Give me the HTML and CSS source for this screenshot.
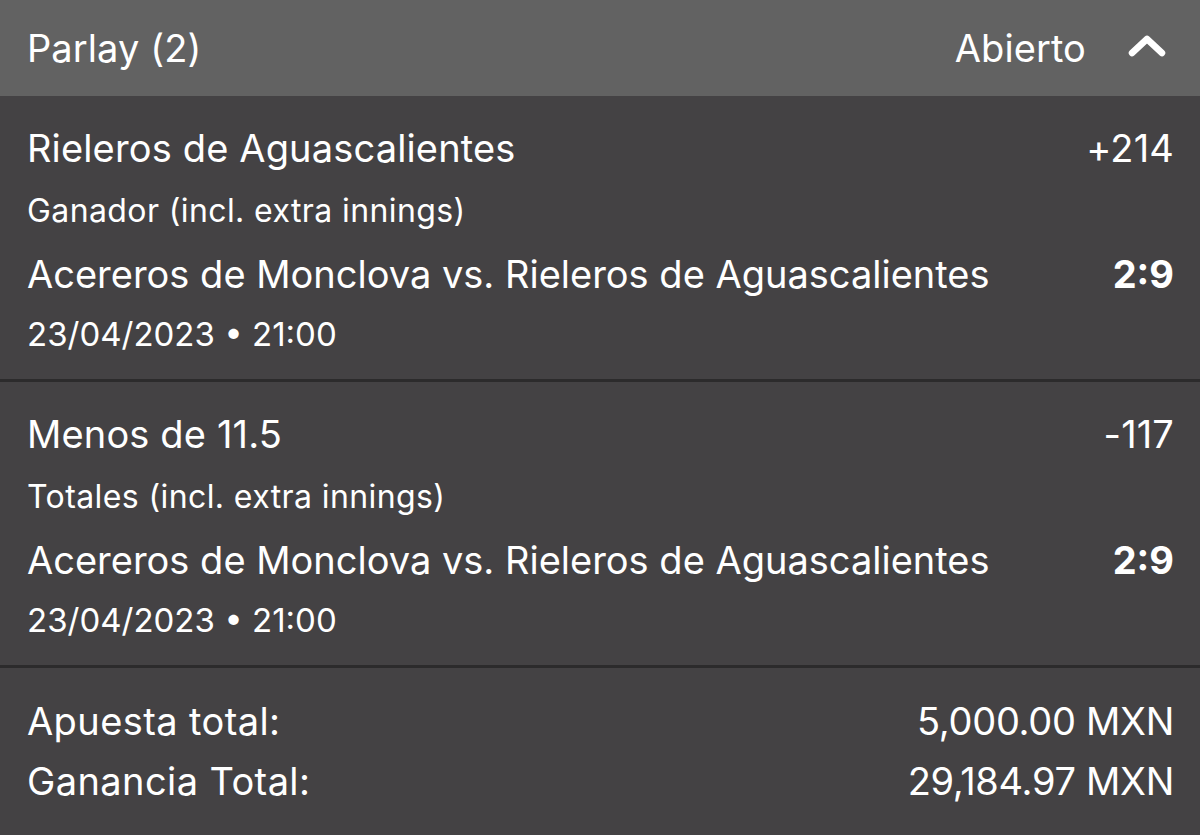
FILE: index.html
```html
<!DOCTYPE html>
<html lang="es">
<head>
<meta charset="utf-8">
<link rel="stylesheet" href="styles.css">
</head>
<body>
<div class="slip">
  <div class="head">
    <span class="head-title">Parlay (2)</span>
    <span class="head-right">
      <span class="status">Abierto</span>
      <svg class="chev" width="38" height="24" viewBox="0 0 38 24"><path d="M4 19 L19 5 L34 19" fill="none" stroke="#fff" stroke-width="6.5" stroke-linecap="round" stroke-linejoin="round"/></svg>
    </span>
  </div>
  <div class="leg">
    <div class="row r1"><span>Rieleros de Aguascalientes</span><span>+214</span></div>
    <div class="row r2"><span>Ganador (incl. extra innings)</span></div>
    <div class="row r3"><span>Acereros de Monclova vs. Rieleros de Aguascalientes</span><span class="score">2:9</span></div>
    <div class="row r4"><span>23/04/2023 • 21:00</span></div>
  </div>
  <div class="leg">
    <div class="row r1"><span>Menos de 11.5</span><span>-117</span></div>
    <div class="row r2"><span>Totales (incl. extra innings)</span></div>
    <div class="row r3"><span>Acereros de Monclova vs. Rieleros de Aguascalientes</span><span class="score">2:9</span></div>
    <div class="row r4"><span>23/04/2023 • 21:00</span></div>
  </div>
  <div class="totals">
    <div class="row t"><span>Apuesta total:</span><span class="val">5,000.00 MXN</span></div>
    <div class="row t"><span>Ganancia Total:</span><span class="val">29,184.97 MXN</span></div>
  </div>
</div>
</body>
</html>
```
FILE: styles.css
```css
html, body { margin: 0; padding: 0; }
body {
  background: #444244;
  font-family: Inter, "Noto Sans", sans-serif;
  color: #fff;
  width: 1200px;
  height: 835px;
  overflow: hidden;
}
.slip { display: flex; flex-direction: column; }
.head {
  height: 96px;
  background: #626262;
  display: flex;
  align-items: center;
  justify-content: space-between;
  padding: 0 27px 0 27px;
  font-size: 38px;
  letter-spacing: 0.1px;
}
.head-right { display: flex; align-items: center; gap: 42px; }
.chev { margin-right: 7px; margin-bottom: 4px; }
.leg {
  height: 286px;
  box-sizing: border-box;
  border-bottom: 3px solid #2c2b2c;
  padding: 29px 26px 0 27px;
}
.row { display: flex; justify-content: space-between; align-items: baseline; }
.r1 { font-size: 38px; height: 66px; letter-spacing: 0.15px; }
.r2 { font-size: 32px; height: 60px; letter-spacing: 0.4px; }
.r3 { font-size: 38px; height: 63px; }
.r4 { font-size: 33px; }
.score { font-weight: 700; }
.totals { padding: 30px 26px 0 27px; }
.t { font-size: 38px; height: 60px; letter-spacing: 0.4px; }
.val { letter-spacing: -0.3px; }
```
